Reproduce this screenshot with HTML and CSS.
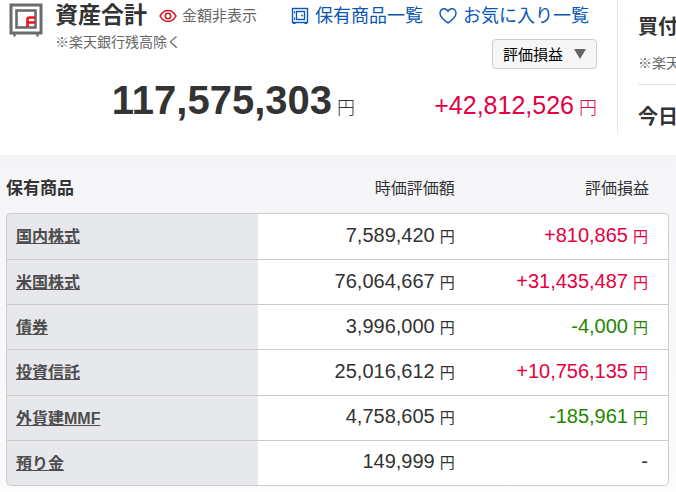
FILE: index.html
```html
<!DOCTYPE html>
<html lang="ja">
<head>
    <meta charset="UTF-8">
    <meta name="viewport" content="width=device-width, initial-scale=1.0">
    <title>資産合計</title>
    <link rel="stylesheet" href="styles.css">
</head>
<body>

<div class="summary">
    <section class="assets">
        <div class="assets-head">
            <svg class="icon-safe" width="34" height="34" viewBox="0 0 34 34" fill="none" stroke="#6b6b6b">
                <rect x="2" y="2" width="30" height="28" stroke-width="3"/>
                <rect x="7.500" y="7.500" width="19" height="17" stroke-width="2.600"/>
                <path d="M5.500 30v3.500M28.500 30v3.500" stroke-width="2.400"/>
                <path d="M26 14.500h-5.500q-2 0-2 2V24M18.500 19.500H26" stroke="#f01018" stroke-width="2.600"/>
            </svg>
            <div class="assets-title">
                <div class="title-line">
                    <h1>資産合計</h1>
                    <button type="button" class="hide-button">
                        <svg width="18" height="14" viewBox="0 0 18 14" fill="none" stroke="#c8141e" stroke-width="1.5">
                            <path d="M1 7C3 3.4 5.8 1.5 9 1.5S15 3.4 17 7c-2 3.6-4.8 5.5-8 5.5S3 10.6 1 7z"/>
                            <circle cx="9" cy="7" r="2.7"/>
                        </svg>
                        金額非表示
                    </button>
                </div>
                <p class="note">※楽天銀行残高除く</p>
            </div>
            <div class="assets-tools">
                <nav class="links">
                    <a href="#">
                        <svg width="18" height="18" viewBox="0 0 18 18" fill="none" stroke="#0b57b5" stroke-width="1.4">
                            <rect x="1.5" y="1.5" width="15" height="14"/>
                            <rect x="5.5" y="4.500" width="8" height="8"/>
                            <path d="M2 16.500h2.500M13.500 16.500H16M3.500 4v2.500M3.500 10.500V13" stroke-width="1.100"/>
                            <circle cx="11" cy="8.500" r="0.900" fill="#0b57b5" stroke="none"/>
                        </svg>
                        保有商品一覧
                    </a>
                    <a href="#">
                        <svg width="18" height="18" viewBox="0 0 18 18" fill="none" stroke="#0b57b5" stroke-width="1.4" stroke-linejoin="round">
                            <path d="M9 16C6.5 14.2 1 10.3 1 6.2 1 3.6 2.8 1.8 5 1.8c1.800 0 3.200 1 4 2.700.8-1.700 2.200-2.700 4-2.700 2.200 0 4 1.800 4 4.400 0 4.100-5.500 8-8 9.800z"/>
                        </svg>
                        お気に入り一覧
                    </a>
                </nav>
                <div class="select-box">
                    <select aria-label="表示項目">
                        <option>評価損益</option>
                    </select>
                </div>
            </div>
        </div>
        <div class="totals">
            <p class="total">117,575,303<span class="yen">円</span></p>
            <p class="gain plus">+42,812,526<span class="yen">円</span></p>
        </div>
    </section>
    <aside class="side">
        <h2>買付</h2>
        <p class="note">※楽天</p>
        <h2 class="today">今日</h2>
    </aside>
</div>

<section class="holdings">
    <table>
        <thead>
            <tr>
                <th scope="col" class="name">保有商品</th>
                <th scope="col" class="value">時価評価額</th>
                <th scope="col" class="profit">評価損益</th>
            </tr>
        </thead>
        <tbody>
            <tr>
                <th scope="row"><a href="#">国内株式</a></th>
                <td class="value">7,589,420<span class="yen">円</span></td>
                <td class="plus">+810,865<span class="yen">円</span></td>
            </tr>
            <tr>
                <th scope="row"><a href="#">米国株式</a></th>
                <td class="value">76,064,667<span class="yen">円</span></td>
                <td class="plus">+31,435,487<span class="yen">円</span></td>
            </tr>
            <tr>
                <th scope="row"><a href="#">債券</a></th>
                <td class="value">3,996,000<span class="yen">円</span></td>
                <td class="minus">-4,000<span class="yen">円</span></td>
            </tr>
            <tr>
                <th scope="row"><a href="#">投資信託</a></th>
                <td class="value">25,016,612<span class="yen">円</span></td>
                <td class="plus">+10,756,135<span class="yen">円</span></td>
            </tr>
            <tr>
                <th scope="row"><a href="#">外貨建MMF</a></th>
                <td class="value">4,758,605<span class="yen">円</span></td>
                <td class="minus">-185,961<span class="yen">円</span></td>
            </tr>
            <tr>
                <th scope="row"><a href="#">預り金</a></th>
                <td class="value">149,999<span class="yen">円</span></td>
                <td>-</td>
            </tr>
        </tbody>
    </table>
</section>

</body>
</html>
```

FILE: styles.css
```css
* {
    box-sizing: border-box;
}

body {
    margin: 0;
    font-family: "Liberation Sans", "Noto Sans CJK JP", sans-serif;
    color: #333;
    background-color: #fff;
    overflow-x: hidden;
}

h1, h2, p {
    margin: 0;
}

.summary {
    display: flex;
    padding-bottom: 22px;
}

.assets {
    flex: 1;
    padding: 0 20px 0 9px;
}

.assets-head {
    display: flex;
}

.icon-safe {
    margin: 3px 12px 0 0;
}

.assets-title {
    flex: 1;
}

.title-line {
    display: flex;
    align-items: center;
    gap: 12px;
    height: 30px;
}

h1 {
    font-size: 23px;
    line-height: 28px;
    white-space: nowrap;
}

.hide-button {
    display: flex;
    align-items: center;
    gap: 5px;
    padding: 2px 0 0;
    border: none;
    background: none;
    font-family: inherit;
    font-size: 15px;
    line-height: 24px;
    color: #666;
    white-space: nowrap;
    cursor: pointer;
}

.note {
    font-size: 14px;
    line-height: 24px;
    color: #666;
    white-space: nowrap;
}

.assets-tools {
    display: flex;
    flex-direction: column;
    align-items: flex-end;
    gap: 7px;
}

.links {
    display: flex;
    gap: 16px;
    padding-right: 8px;
}

.links a {
    display: flex;
    align-items: center;
    gap: 6px;
    font-size: 18px;
    line-height: 32px;
    color: #0b57b5;
    text-decoration: none;
    white-space: nowrap;
}

.select-box {
    position: relative;
}

.select-box::after {
    content: "";
    position: absolute;
    top: 10px;
    right: 11px;
    border: 6px solid transparent;
    border-top: 10px solid #666;
    border-bottom: none;
    pointer-events: none;
}

select {
    appearance: none;
    display: block;
    width: 105px;
    height: 30px;
    padding: 0 10px;
    border: 1px solid #ccc;
    border-radius: 4px;
    background-color: #f6f6f6;
    font-family: inherit;
    font-size: 15px;
    color: #000;
}

.totals {
    display: grid;
    grid-template-columns: 1fr 242px;
    align-items: baseline;
    padding-top: 6px;
    text-align: right;
    white-space: nowrap;
}

.yen {
    margin-left: 5px;
    font-size: 15px;
}

.totals .yen {
    font-size: 18px;
    font-weight: 300;
}

.total {
    font-size: 40px;
    line-height: 50px;
    font-weight: bold;
}

.gain {
    font-size: 25px;
}

.plus {
    color: #e5003f;
}

.minus {
    color: #1f8500;
}

.side {
    width: 59px;
    padding: 12px 0 0 20px;
    border-left: 1px solid #e5e5e5;
    overflow: hidden;
}

.side h2 {
    font-size: 20px;
    line-height: 30px;
    white-space: nowrap;
}

.side .note {
    padding: 9px 0;
}

.side .today {
    padding-top: 17px;
    border-top: 1px solid #e5e5e5;
}

.holdings {
    padding: 0 7px 5px 6px;
    background: linear-gradient(#f5f5f8, #fbfbfb);
}

table {
    width: 100%;
    height: 331px;
    table-layout: fixed;
    border-collapse: separate;
    border-spacing: 0;
}

th, td {
    padding: 0 20px 0 0;
    text-align: right;
    white-space: nowrap;
}

.value {
    padding-right: 22px;
}

thead th {
    height: 58px;
    padding-top: 5px;
    font-size: 16px;
    font-weight: normal;
}

thead .name {
    width: 38%;
    font-size: 17px;
    font-weight: bold;
    text-align: left;
}

thead .value {
    width: 33%;
}

thead .profit {
    width: 29%;
}

/* the body's top line is drawn by the first row so its corners can be round */
tbody tr:first-child > * {
    border-top: 1px solid #ccc;
}

tbody th, tbody td {
    padding-bottom: 2px;
    border-bottom: 1px solid #ccc;
}

tbody th {
    padding-left: 9px;
    border-left: 1px solid #ccc;
    background-color: #e7e8ec;
    font-size: 16px;
    text-align: left;
}

tbody th a {
    color: #4d4d4d;
}

tbody td {
    background-color: #fff;
    font-size: 20px;
}

tbody td:last-child {
    border-right: 1px solid #ccc;
}

tbody tr:first-child th {
    border-top-left-radius: 5px;
}

tbody tr:first-child td:last-child {
    border-top-right-radius: 5px;
}

tbody tr:last-child th {
    border-bottom-left-radius: 5px;
}

tbody tr:last-child td:last-child {
    border-bottom-right-radius: 5px;
}
```
